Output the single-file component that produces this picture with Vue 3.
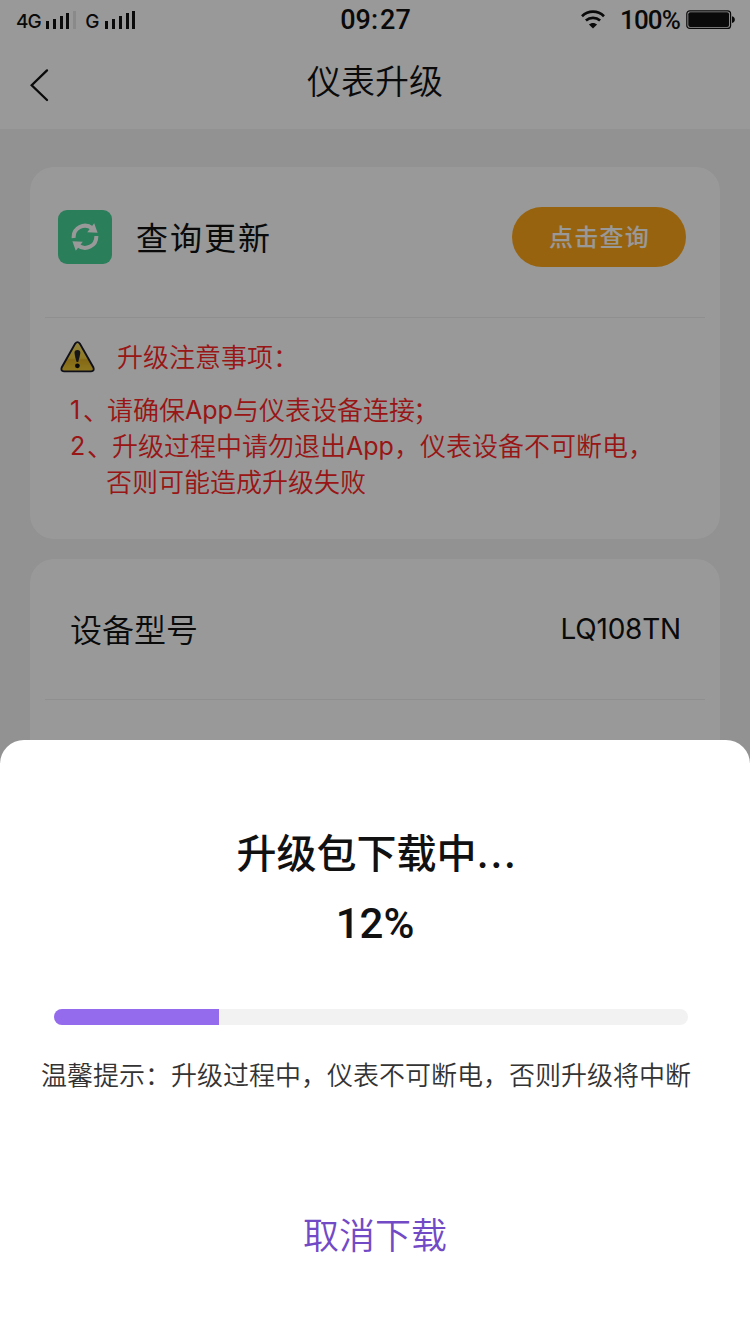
<script setup>
import { ref } from 'vue'

const simOne = [{ h: 8 }, { h: 10 }, { h: 13 }, { h: 16 }, { h: 18, off: true }]
const simTwo = [{ h: 8 }, { h: 10 }, { h: 13 }, { h: 16 }, { h: 18 }]
const percent = ref(12)
const barWidth = ref(26)
</script>

<template>
  <div class="screen">
    <header class="status">
      <div class="status-left">
        <span class="net">4G</span>
        <span class="bars"><i v-for="(b, i) in simOne" :key="i" :class="{ off: b.off }" :style="{ height: b.h + 'px' }"></i></span>
        <span class="net second">G</span>
        <span class="bars"><i v-for="(b, i) in simTwo" :key="i" :style="{ height: b.h + 'px' }"></i></span>
      </div>
      <div class="clock">09<span class="colon">:</span>27</div>
      <div class="status-right">
        <svg class="wifi" width="24" height="19" viewBox="0 0 24 19" fill="none" stroke="#111" stroke-width="2.7">
          <path d="M1 6.2C7.2 .2 16.8 .2 23 6.2" />
          <path d="M4.9 10.6C9 6.9 15 6.9 19.1 10.6" />
          <path d="M12 18.6L7.9 14.6C10.2 12.4 13.8 12.4 16.1 14.6Z" fill="#111" stroke="none" />
        </svg>
        <span class="charge">100%</span>
        <svg class="battery" width="50" height="20" viewBox="0 0 50 20">
          <rect x=".8" y=".8" width="43.8" height="17.6" rx="3" fill="none" stroke="#111" stroke-width="1.2" />
          <rect x="2.3" y="2.3" width="40.8" height="14.6" rx="2" fill="#111" />
          <path d="M46 6.2C49.8 6.8 49.8 12.4 46 13Z" fill="#111" />
        </svg>
      </div>
    </header>

    <nav class="nav">
      <svg class="back" width="20" height="34" viewBox="0 0 20 34" fill="none" stroke="#111" stroke-width="2.3" stroke-linecap="round">
        <path d="M18 2.4L2.7 17.3L18 32" />
      </svg>
      <h1>仪表升级</h1>
    </nav>

    <main>
      <section class="card notice">
        <div class="query">
          <span class="badge">
            <svg width="28" height="28" viewBox="0 0 28 28" fill="none" stroke="#fff" stroke-width="4">
              <path d="M2.7 15A11.3 11.3 0 0 1 21.2 5.4" />
              <path d="M25.3 13A11.3 11.3 0 0 1 7 22.4" />
              <path d="M23.2 .2L26.6 9.8L16.2 9.2Z M4.8 27.8L1.4 18.2L11.8 18.8Z" fill="#fff" stroke="none" />
            </svg>
          </span>
          <h2>查询更新</h2>
          <button>点击查询</button>
        </div>
        <div class="rule"></div>
        <div class="warn">
          <svg width="36" height="32" viewBox="0 0 36 32">
            <defs>
              <linearGradient id="amber" x1="0" y1="0" x2="0" y2="1">
                <stop offset="0" stop-color="#f3dc6a" />
                <stop offset=".55" stop-color="#edcb3e" />
                <stop offset=".6" stop-color="#dfae22" />
                <stop offset="1" stop-color="#efca38" />
              </linearGradient>
            </defs>
            <path d="M15.2 2.6Q17.5 -.3 19.8 2.6L33.4 26.5Q34.8 30.2 31 30.4H4Q.4 30.2 1.7 26.5Z" fill="url(#amber)" stroke="#1b1b2c" stroke-width="1.9" />
            <path d="M14.5 12Q14.3 9 17.4 9Q20.5 9 20.3 12Q19.8 16.2 18.2 21H16.6Q14.9 16.2 14.5 12Z" fill="#25252b" />
            <circle cx="17.4" cy="24.8" r="2.4" fill="#111" />
          </svg>
          <h3>升级注意事项<span class="pt">：</span></h3>
        </div>
        <div class="notes">
          <p class="n1"><span class="num">1</span><span class="dun">、</span>请确保<span class="app">App</span>与仪表设备连接<span class="pt semi">；</span></p>
          <p class="n2"><span class="num">2</span><span class="dun">、</span>升级过程中请勿退出<span class="app">App</span><span class="pt">，</span>仪表设备不可断电<span class="pt">，</span></p>
          <p class="n3">否则可能造成升级失败</p>
        </div>
      </section>
      <section class="card device">
        <div class="model"><span>设备型号</span><span class="value">LQ108TN</span></div>
        <div class="rule"></div>
      </section>
    </main>

    <div class="mask"></div>
    <section class="sheet">
      <h2>升级包下载中<span class="dots">...</span></h2>
      <div class="percent">{{ percent }}%</div>
      <div class="track"><div class="fill" :style="{ width: barWidth + '%' }"></div></div>
      <p class="tip">温馨提示：升级过程中，仪表不可断电，否则升级将中断</p>
      <button class="cancel">取消下载</button>
    </section>
  </div>
</template>

<style>
body { margin: 0; }
</style>

<style scoped>
* { box-sizing: border-box; }
h1, h2, h3, p { margin: 0; font-weight: 350; }
button { border: 0; padding: 0; font-family: inherit; }
.screen { position: relative; width: 750px; height: 1334px; overflow: hidden; background: #f3f3f3; color: #111; font-family: "Noto Sans CJK SC", sans-serif; font-weight: 350; white-space: nowrap; }
.status { display: grid; grid-template-columns: 1fr 72px 1fr; height: 40px; background: #fff; font-family: Inter, sans-serif; }
.status-left { display: flex; padding-left: 16px; height: 30px; align-items: flex-end; }
.net { width: 30px; font-size: 19px; font-weight: 500; line-height: 16px; letter-spacing: -1px; }
.net.second { width: 20px; margin-left: 9px; }
.bars { display: flex; align-items: flex-end; gap: 3.8px; height: 19px; padding-bottom: 1px; }
.bars i { width: 3px; background: #111; }
.bars i.off { background: #e6e6e6; }
.clock { font-family: Roboto, sans-serif; font-size: 27px; font-weight: 500; line-height: 41px; padding-left: 1px; text-align: center; }
.colon { padding: 0 2px 0 0; }
.status-right { display: flex; justify-content: flex-end; padding-right: 14px; }
.wifi { margin: 10px 15px 0 0; }
.charge { font-family: Roboto, sans-serif; font-size: 26px; font-weight: 500; line-height: 40px; letter-spacing: -0.9px; width: 66px; }
.battery { margin-top: 10px; }
.nav { position: relative; height: 89px; background: #fff; text-align: center; }
.nav h1 { font-size: 34px; line-height: 79px; }
.back { position: absolute; left: 29px; top: 28px; }
main { padding: 38px 30px 0; }
.card { background: #fff; border-radius: 24px; padding: 0 15px; }
.notice { height: 372px; margin-bottom: 20px; }
.device { height: 300px; }
.query { display: flex; align-items: center; height: 150px; padding: 0 19px 10px 13px; }
.badge { display: flex; align-items: center; justify-content: center; width: 54px; height: 54px; border-radius: 9px; background: #47d297; }
.query h2 { flex: 1; margin-left: 24px; font-size: 32px; font-weight: 400; letter-spacing: 2px; line-height: 54px; padding-bottom: 2px; }
.query button { width: 174px; height: 60px; border-radius: 30px; background: #fea61a; color: #fff; font-size: 24px; font-weight: 500; letter-spacing: 1.3px; line-height: 58px; padding: 0 0 2px 1px; }
.rule { height: 1px; background: #efefef; }
.warn { display: flex; height: 73px; padding: 23px 0 0 15px; color: #fe2525; }
.warn h3 { margin-left: 21px; font-size: 26px; line-height: 30px; }
.notes { padding-left: 25px; font-size: 26px; line-height: 36px; color: #fe2525; }
.notes p { display: flex; height: 36px; }
.pt { display: inline-block; width: 26px; }
.semi { margin-left: -2px; }
.num { width: 13px; font-family: Inter, sans-serif; font-size: 25px; font-weight: 400; }
.dun { width: 24px; }
.n2 .num { width: 17px; }
.n2 .dun { width: 25px; }
.n3 { padding-left: 36px; }
.app { width: 48px; font-family: Inter, sans-serif; font-size: 25px; font-weight: 400; }
.num, .app { padding-top: 1px; }
.model { display: flex; justify-content: space-between; height: 140px; padding: 0 24px 0 25px; font-size: 32px; line-height: 139px; }
.value { font-family: Inter, sans-serif; font-size: 28px; font-weight: 400; letter-spacing: -0.2px; line-height: 141px; }
.mask { position: absolute; inset: 0; background: rgba(0, 0, 0, 0.4); }
.sheet { position: absolute; left: 0; right: 0; bottom: 0; height: 594px; background: #fff; border-radius: 24px 24px 0 0; padding-top: 81px; text-align: center; }
.sheet h2 { font-size: 40px; font-weight: 500; line-height: 60px; padding-left: 4px; }
.dots { font-family: Inter, sans-serif; letter-spacing: 1.6px; }
.percent { margin-top: 10px; font-family: Roboto, sans-serif; font-size: 42px; font-weight: 500; line-height: 60px; }
.track { width: 634px; height: 16px; margin: 55px 0 0 54px; border-radius: 8px; background: #f2f2f2; overflow: hidden; }
.fill { height: 100%; background: #956bed; }
.tip { margin: 31px 0 0 41px; font-size: 26px; line-height: 36px; color: #333; text-align: left; }
.cancel { display: block; margin: 114px auto 0; background: none; color: #734ac6; font-size: 36px; font-weight: 350; line-height: 54px; }
</style>
